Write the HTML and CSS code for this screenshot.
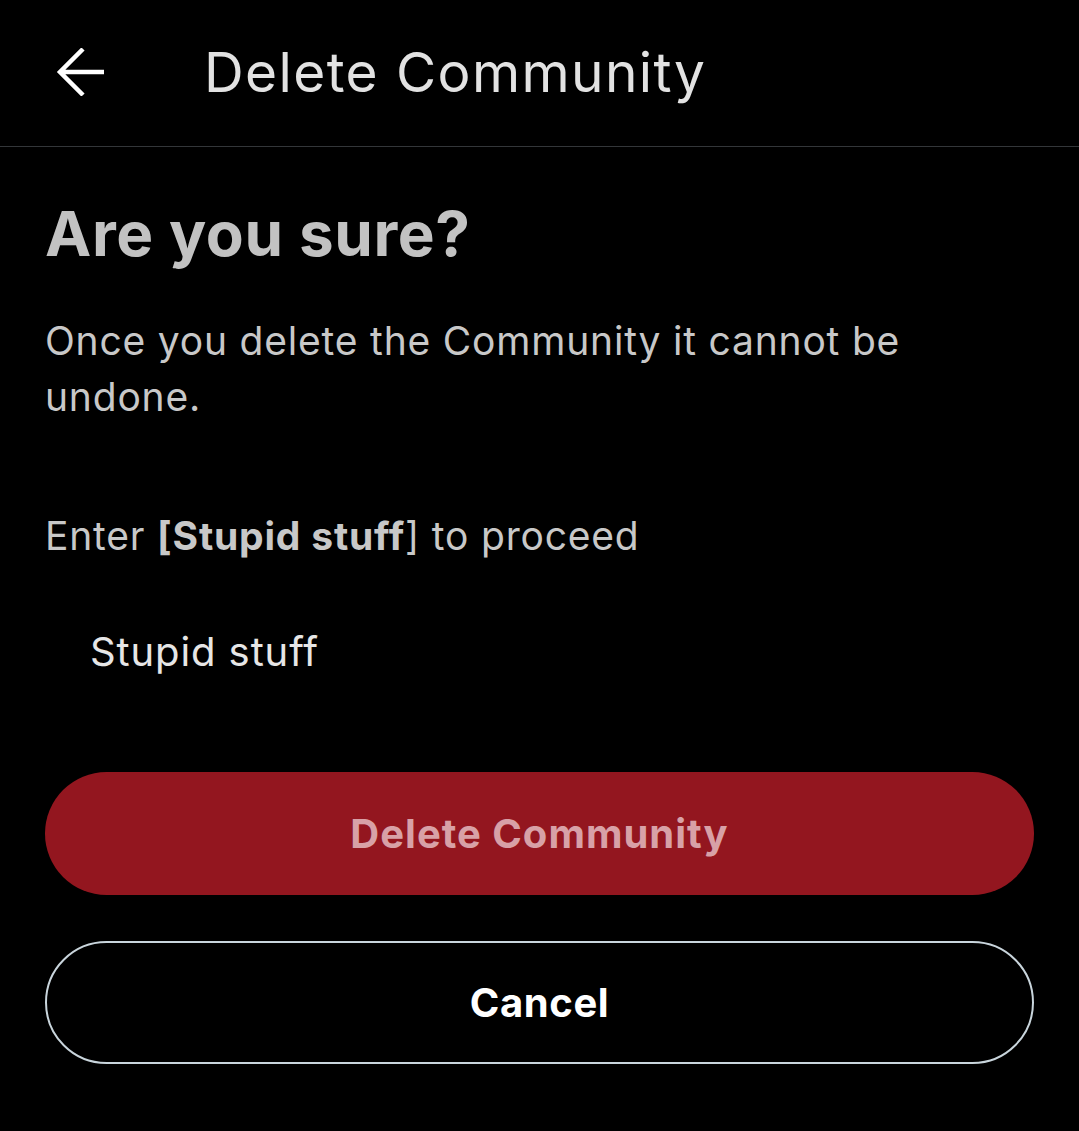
FILE: index.html
```html
<!DOCTYPE html>
<html lang="en">
<head>
    <meta charset="UTF-8">
    <meta name="viewport" content="width=device-width, initial-scale=1.0">
    <title>Delete Community</title>
    <link rel="stylesheet" href="styles.css">
</head>
<body>
    <header class="topbar">
        <a href="#" class="back" aria-label="Back">
            <svg width="48" height="48" viewBox="0 0 48 48">
                <path d="M27 1 L4 24 L27 47 M4 24 H48" fill="none" stroke="#fff" stroke-width="4.5"/>
            </svg>
        </a>
        <h2 class="title">Delete Community</h2>
    </header>

    <main class="content">
        <h1 class="question">Are you sure?</h1>
        <p class="note">Once you delete the Community it cannot be undone.</p>

        <p class="prompt">Enter <b>[Stupid stuff</b>] to proceed</p>
        <input type="text" class="confirm-input" value="Stupid stuff">

        <div class="actions">
            <button type="button" class="btn btn-danger">Delete Community</button>
            <button type="button" class="btn btn-outline">Cancel</button>
        </div>
    </main>
</body>
</html>
```

FILE: styles.css
```css
body {
    margin: 0;
    padding: 0;
    background-color: #000;
    font-family: Inter, Roboto, "Noto Sans", Arial, sans-serif;
    color: #c4c4c4;
}

.topbar {
    height: 147px;
    border-bottom: 1px solid #333639;
    display: flex;
    align-items: center;
    padding-left: 56px;
    box-sizing: border-box;
}

.back {
    display: flex;
    width: 48px;
    height: 48px;
    margin-top: -2px;
}

.title {
    margin: 0 0 0 100px;
    font-size: 55px;
    letter-spacing: 1.4px;
    font-weight: 400;
    color: #e2e2e2;
    margin-top: -3px;
}

.content {
    padding: 49px 45px 0 45px;
}

.question {
    margin: 0;
    font-size: 62px;
    letter-spacing: 0.6px;
    line-height: 76px;
    font-weight: 700;
    color: #c2c2c2;
}

.note {
    margin: 41px 0 0 0;
    font-size: 39px;
    letter-spacing: 0.8px;
    line-height: 56px;
    color: #c8c8c8;
}

.prompt {
    margin: 83px 0 0 0;
    font-size: 39px;
    letter-spacing: 0.8px;
    line-height: 56px;
    color: #c8c8c8;
}

.prompt b {
    font-weight: 700;
}

.confirm-input {
    display: block;
    margin: 59px 0 0 0;
    padding: 0 0 0 45px;
    width: 100%;
    box-sizing: border-box;
    height: 56px;
    border: none;
    outline: none;
    background: transparent;
    font-family: inherit;
    font-size: 40px;
    letter-spacing: 0.9px;
    color: #e6e6e6;
}

.actions {
    margin-top: 93px;
    display: flex;
    flex-direction: column;
    gap: 46px;
}

.btn {
    height: 123px;
    border-radius: 62px;
    font-family: inherit;
    font-size: 40px;
    letter-spacing: 0.6px;
    font-weight: 700;
    cursor: pointer;
}

.btn-danger {
    background-color: #93161f;
    border: none;
    color: #d8a1a7;
    letter-spacing: 1px;
}

.btn-outline {
    background-color: #000;
    border: 2.5px solid #c9d5dc;
    color: #fff;
}
```
